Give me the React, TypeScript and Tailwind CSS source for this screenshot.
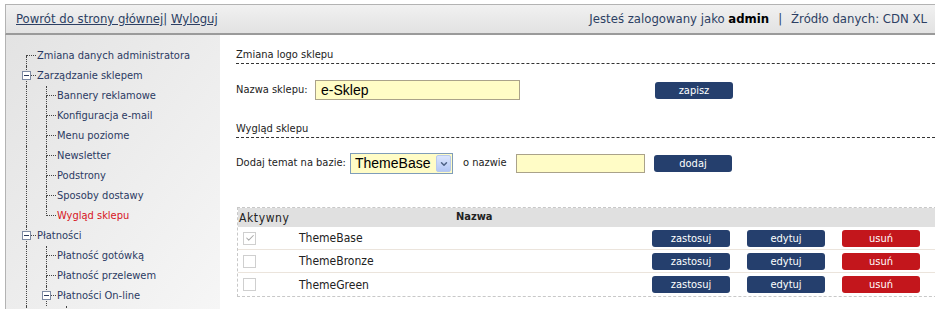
import { Check, ChevronDown } from 'lucide-react';

type TreeNode = {
  label: string;
  level: 1 | 2;
  box?: boolean;
  first?: boolean;
  last?: boolean;
  active?: boolean;
};

const tree: TreeNode[] = [
  { label: 'Zmiana danych administratora', level: 1, first: true },
  { label: 'Zarządzanie sklepem', level: 1, box: true },
  { label: 'Bannery reklamowe', level: 2 },
  { label: 'Konfiguracja e-mail', level: 2 },
  { label: 'Menu poziome', level: 2 },
  { label: 'Newsletter', level: 2 },
  { label: 'Podstrony', level: 2 },
  { label: 'Sposoby dostawy', level: 2 },
  { label: 'Wygląd sklepu', level: 2, last: true, active: true },
  { label: 'Płatności', level: 1, box: true },
  { label: 'Płatność gotówką', level: 2 },
  { label: 'Płatność przelewem', level: 2 },
  { label: 'Płatności On-line', level: 2, box: true },
];

const themes = [
  { name: 'ThemeBase', active: true },
  { name: 'ThemeBronze', active: false },
  { name: 'ThemeGreen', active: false },
];

const font = "font-['Tahoma','DejaVu_Sans_Condensed','Noto_Sans',sans-serif]";

function Branch({ node }: { node: TreeNode }) {
  return (
    <div className="relative flex w-[10px] shrink-0 flex-col">
      <div
        className={`h-[10px] border-b border-dotted border-b-[#444] ${
          node.first ? '' : 'border-l border-l-[#444] border-dotted'
        }`}
      />
      <div className={`h-[10px] ${node.last ? '' : 'border-l border-dotted border-l-[#444]'}`} />
      {node.box && (
        <div className="absolute left-[-4px] top-[5px] flex h-[9px] w-[9px] items-center justify-center border border-[#7d8aa3] bg-white">
          <div className="h-[1px] w-[5px] bg-[#2b3a5c]" />
        </div>
      )}
    </div>
  );
}

function TreeRow({ node }: { node: TreeNode }) {
  return (
    <div className="flex h-[20px] pl-[20px]">
      {node.level === 2 && <div className="w-[20px] shrink-0 border-l border-dotted border-l-[#444]" />}
      <Branch node={node} />
      <span
        className={`pl-[1px] text-[11px] leading-[20px] whitespace-nowrap ${
          node.active ? 'text-[#d7141d]' : 'text-[#2b3a63]'
        }`}
      >
        {node.label}
      </span>
    </div>
  );
}

function Btn({ label, red }: { label: string; red?: boolean }) {
  return (
    <button
      className={`flex h-[17px] w-[78px] items-center justify-center rounded-[3px] text-[11px] leading-none text-white ${
        red ? 'bg-[#c3161c]' : 'bg-[#253f6d]'
      }`}
    >
      {label}
    </button>
  );
}

function Section({ title }: { title: string }) {
  return (
    <div className="border-b border-dashed border-[#333] pb-[1px] text-[11px] leading-[14px] text-[#222]">
      {title}
    </div>
  );
}

export default function App() {
  return (
    <div className={`h-[309px] w-[935px] overflow-hidden bg-white pl-[5px] pt-[4px] ${font}`}>
      <div className="flex h-[31px] items-center justify-between border-l border-t border-b-2 border-l-[#b3b3b3] border-t-[#b3b3b3] border-b-[#9a9a9a] bg-gradient-to-b from-[#f1f1f1] to-[#e2e2e2] pl-[10px] pr-[8px] text-[13px] text-[#2d3f63]">
        <div className="whitespace-nowrap">
          <a className="underline">Powrót do strony głównej</a>
          <span>| </span>
          <a className="underline">Wyloguj</a>
        </div>
        <div className="whitespace-nowrap">
          Jesteś zalogowany jako <b className="text-black">admin</b>
          <span className="px-[9px]">|</span>
          Źródło danych: CDN XL
        </div>
      </div>

      <div className="flex h-[274px]">
        <aside className="w-[215px] shrink-0 border-l border-[#b3b3b3] bg-gradient-to-br from-[#e3e3e3] to-[#f6f6f6] pt-[11px]">
          {tree.map((n) => (
            <TreeRow key={n.label} node={n} />
          ))}
          <div className="flex h-[20px] pl-[20px]">
            <div className="w-[40px] border-l border-dotted border-l-[#444]" />
            <div className="w-[10px] border-l border-dotted border-l-[#444]" />
          </div>
        </aside>

        <main className="min-w-0 flex-1 pl-[16px] pt-[13px]">
          <Section title="Zmiana logo sklepu" />
          <div className="mt-[16px] flex h-[20px] items-center">
            <span className="w-[79px] shrink-0 text-[11px] text-[#222]">Nazwa sklepu:</span>
            <div className="flex h-[20px] w-[205px] items-center border border-[#aaa28a] bg-[#fffcc6] px-[5px] font-['Liberation_Sans',Arial,sans-serif] text-[14px] text-black">
              e-Sklep
            </div>
            <div className="ml-[135px]">
              <Btn label="zapisz" />
            </div>
          </div>

          <div className="mt-[22px]">
            <Section title="Wygląd sklepu" />
          </div>
          <div className="mt-[15px] flex h-[21px] items-center">
            <span className="w-[114px] shrink-0 text-[11px] text-[#222]">Dodaj temat na bazie:</span>
            <div className="flex h-[21px] w-[103px] items-center border border-[#7f9db9] bg-[#fffcc6]">
              <span className="flex-1 pl-[4px] font-['Liberation_Sans',Arial,sans-serif] text-[14px] text-black">
                ThemeBase
              </span>
              <div className="mr-[1px] flex h-[17px] w-[15px] items-center justify-center rounded-[2px] border border-[#b8c9ee] bg-gradient-to-b from-[#dbe5fc] to-[#b3c7f5]">
                <ChevronDown className="h-[10px] w-[10px] text-[#4d6185]" strokeWidth={3.5} />
              </div>
            </div>
            <span className="ml-[10px] w-[53px] shrink-0 text-[11px] text-[#222]">o nazwie</span>
            <div className="h-[19px] w-[129px] border border-[#aaa28a] bg-[#fffcc6]" />
            <div className="ml-[9px]">
              <Btn label="dodaj" />
            </div>
          </div>

          <div className="ml-[1px] mt-[33px] w-[720px] border border-dashed border-[#c8c8c8] text-[11px]">
            <div className="flex h-[19px] items-center bg-[#e0e0e0] text-[#222]">
              <span className="w-[218px] pl-[1px] text-[12px] tracking-[0.6px]">Aktywny</span>
              <span className="font-bold">Nazwa</span>
            </div>
            {themes.map((t, i) => (
              <div
                key={t.name}
                className={`flex h-[23px] items-center ${i < themes.length - 1 ? 'border-b border-[#ebe4dc]' : ''}`}
              >
                <div className="ml-[5px] flex h-[13px] w-[13px] items-center justify-center border border-[#cfcfcf] bg-white">
                  {t.active && <Check className="h-[10px] w-[10px] text-[#a8a8a8]" strokeWidth={2.5} />}
                </div>
                <span className="ml-[43px] w-[353px] text-[12px] text-[#222]">{t.name}</span>
                <div className="flex gap-[17px]">
                  <Btn label="zastosuj" />
                  <Btn label="edytuj" />
                  <Btn label="usuń" red />
                </div>
              </div>
            ))}
          </div>
        </main>
      </div>
    </div>
  );
}
